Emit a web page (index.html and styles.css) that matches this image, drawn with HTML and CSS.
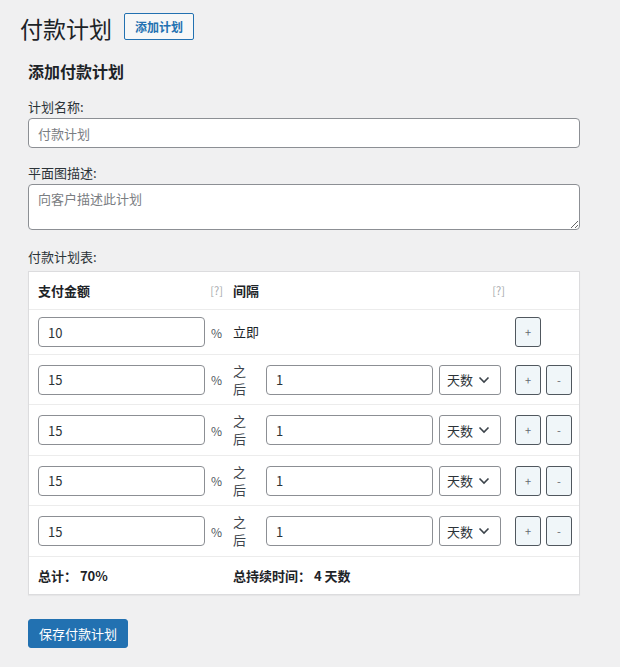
FILE: index.html
```html
<!DOCTYPE html>
<html lang="zh-CN">
<head>
  <meta charset="UTF-8">
  <title>付款计划</title>
  <link rel="stylesheet" href="styles.css">
</head>
<body>
  <div class="wrap">
    <div class="page-head">
      <h1>付款计划</h1>
      <a href="#" class="add-new">添加计划</a>
    </div>

    <form class="plan-form">
      <h2>添加付款计划</h2>

      <div class="field">
        <label for="planName">计划名称:</label>
        <input type="text" id="planName" class="text-input" placeholder="付款计划">
      </div>

      <div class="field field-desc">
        <label for="planDesc">平面图描述:</label>
        <textarea id="planDesc" class="text-area" placeholder="向客户描述此计划"></textarea>
      </div>

      <div class="field">
        <label>付款计划表:</label>
        <div class="schedule">
          <div class="row head">
            <div class="col-amount"><span>支付金额</span><span class="help">[?]</span></div>
            <div class="col-interval"><span>间隔</span><span class="help">[?]</span></div>
            <div class="col-actions"></div>
          </div>

          <div class="row">
            <div class="col-amount"><input type="text" class="num" value="10"><span class="pct">%</span></div>
            <div class="col-interval"><span class="now">立即</span></div>
            <div class="col-actions"><button type="button" class="sq">+</button></div>
          </div>

          <div class="row">
            <div class="col-amount"><input type="text" class="num" value="15"><span class="pct">%</span></div>
            <div class="col-interval">
              <span class="after">之后</span>
              <input type="text" class="num" value="1">
              <div class="unit">天数 <svg width="12" height="8" viewBox="0 0 12 8"><path d="M1.5 1.5 6 6l4.5-4.5" fill="none" stroke="#3c434a" stroke-width="1.6"/></svg></div>
            </div>
            <div class="col-actions"><button type="button" class="sq">+</button><button type="button" class="sq">-</button></div>
          </div>

          <div class="row">
            <div class="col-amount"><input type="text" class="num" value="15"><span class="pct">%</span></div>
            <div class="col-interval">
              <span class="after">之后</span>
              <input type="text" class="num" value="1">
              <div class="unit">天数 <svg width="12" height="8" viewBox="0 0 12 8"><path d="M1.5 1.5 6 6l4.5-4.5" fill="none" stroke="#3c434a" stroke-width="1.6"/></svg></div>
            </div>
            <div class="col-actions"><button type="button" class="sq">+</button><button type="button" class="sq">-</button></div>
          </div>

          <div class="row">
            <div class="col-amount"><input type="text" class="num" value="15"><span class="pct">%</span></div>
            <div class="col-interval">
              <span class="after">之后</span>
              <input type="text" class="num" value="1">
              <div class="unit">天数 <svg width="12" height="8" viewBox="0 0 12 8"><path d="M1.5 1.5 6 6l4.5-4.5" fill="none" stroke="#3c434a" stroke-width="1.6"/></svg></div>
            </div>
            <div class="col-actions"><button type="button" class="sq">+</button><button type="button" class="sq">-</button></div>
          </div>

          <div class="row">
            <div class="col-amount"><input type="text" class="num" value="15"><span class="pct">%</span></div>
            <div class="col-interval">
              <span class="after">之后</span>
              <input type="text" class="num" value="1">
              <div class="unit">天数 <svg width="12" height="8" viewBox="0 0 12 8"><path d="M1.5 1.5 6 6l4.5-4.5" fill="none" stroke="#3c434a" stroke-width="1.6"/></svg></div>
            </div>
            <div class="col-actions"><button type="button" class="sq">+</button><button type="button" class="sq">-</button></div>
          </div>

          <div class="row foot">
            <div class="col-amount">总计：&nbsp;70%</div>
            <div class="col-interval">总持续时间：&nbsp;4 天数</div>
            <div class="col-actions"></div>
          </div>
        </div>
      </div>

      <button type="button" class="save">保存付款计划</button>
    </form>
  </div>
</body>
</html>
```

FILE: styles.css
```css
/* base */
body {
  margin: 0;
  background: #f0f0f1;
  color: #1d2327;
  font-family: "Noto Sans CJK SC", "Noto Sans", sans-serif;
  font-size: 13px;
}

.wrap {
  padding: 13px 20px 0 20px;
}

/* page title */
.page-head {
  display: flex;
  align-items: center;
  gap: 12px;
  height: 30px;
}

h1 {
  margin: 0;
  font-size: 23px;
  font-weight: 400;
  line-height: 30px;
  color: #1d2327;
}

.add-new {
  display: inline-block;
  height: 25px;
  line-height: 25px;
  padding: 0 10px;
  border: 1px solid #2271b1;
  border-radius: 2px;
  background: #f6f7f7;
  color: #2271b1;
  font-size: 12px;
  font-weight: 600;
  text-decoration: none;
  margin-top: -3px;
}

/* form */
.plan-form {
  padding-left: 8px;
  width: 552px;
}

h2 {
  margin: 17px 0 16px;
  font-size: 16px;
  font-weight: 700;
  line-height: 22px;
}

.field {
  margin-bottom: 16px;
}

.field-desc {
  margin-bottom: 18px;
}

.field label {
  display: block;
  line-height: 18px;
  margin-bottom: 2px;
  color: #2c3338;
}

.text-input,
.text-area {
  display: block;
  box-sizing: border-box;
  width: 100%;
  border: 1px solid #8c8f94;
  border-radius: 4px;
  background: #fff;
  font-family: inherit;
  font-size: 13px;
  color: #2c3338;
  padding: 0 9px;
}

.text-input {
  height: 30px;
}

.text-area {
  height: 46px;
  padding-top: 4px;
  resize: vertical;
}

.text-input::placeholder,
.text-area::placeholder {
  color: #7a7d82;
}

/* schedule table */
.schedule {
  margin-top: 5px;
  background: #fff;
  border: 1px solid #dcdcde;
  box-shadow: 0 1px 1px rgba(0, 0, 0, 0.04);
}

.row {
  display: flex;
  align-items: center;
  padding: 7px 0 6.5px;
  border-top: 1px solid #ececec;
}

.row.head,
.row.foot {
  padding: 10px 0;
  font-weight: 700;
  line-height: 17px;
}

.row.head {
  border-top: none;
}

.col-amount {
  width: 185px;
  padding-left: 9px;
  display: flex;
  align-items: center;
  justify-content: space-between;
  padding-right: 10px;
  flex-shrink: 0;
}

.col-interval {
  width: 272px;
  display: flex;
  align-items: center;
  flex-shrink: 0;
}

.row.head .col-interval {
  justify-content: space-between;
}

.row.foot .col-amount {
  justify-content: flex-start;
}

.help {
  font-weight: 400;
  font-size: 11px;
  color: #a7aaad;
}

.col-actions {
  flex: 1;
  display: flex;
  gap: 5px;
  padding-left: 10px;
}

.num {
  box-sizing: border-box;
  width: 167px;
  height: 30px;
  border: 1px solid #8c8f94;
  border-radius: 4px;
  padding: 0 9px;
  font-family: inherit;
  font-size: 13px;
  color: #2c3338;
  background: #fff;
}

.pct {
  color: #50575e;
  font-size: 12px;
  width: 12px;
}

.now {
  line-height: 30px;
}

.after {
  width: 14px;
  font-size: 13px;
  line-height: 18px;
  margin-right: 19px;
  color: #3c434a;
}

.unit {
  box-sizing: border-box;
  width: 62px;
  height: 30px;
  margin-left: 6px;
  border: 1px solid #8c8f94;
  border-radius: 3px;
  display: flex;
  align-items: center;
  gap: 5px;
  padding-left: 7px;
  color: #2c3338;
}

.sq {
  box-sizing: border-box;
  width: 26px;
  height: 30px;
  padding: 0;
  border: 1px solid #50575e;
  border-radius: 3px;
  background: #f0f6f9;
  color: #646970;
  font-size: 11px;
  font-family: inherit;
  cursor: pointer;
}

/* save */
.save {
  margin-top: 8px;
  height: 29px;
  padding: 0 10px;
  border: 1px solid #2271b1;
  border-radius: 3px;
  background: #2271b1;
  color: #fff;
  font-family: inherit;
  font-size: 13px;
  cursor: pointer;
}
```
